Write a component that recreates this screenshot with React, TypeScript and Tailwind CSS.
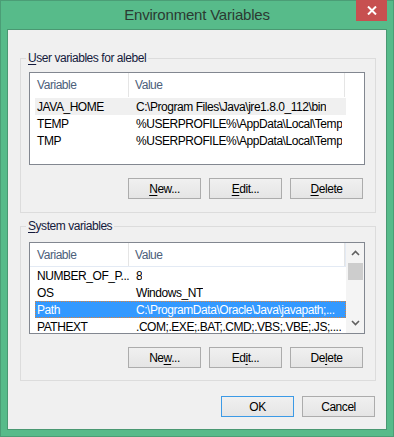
import React from 'react';

type Row = { name: string; value: string; state?: 'inactive' | 'active' };

const userVars: Row[] = [
  { name: 'JAVA_HOME', value: 'C:\\Program Files\\Java\\jre1.8.0_112\\bin', state: 'inactive' },
  { name: 'TEMP', value: '%USERPROFILE%\\AppData\\Local\\Temp' },
  { name: 'TMP', value: '%USERPROFILE%\\AppData\\Local\\Temp' },
];

const systemVars: Row[] = [
  { name: 'NUMBER_OF_P...', value: '8' },
  { name: 'OS', value: 'Windows_NT' },
  { name: 'Path', value: 'C:\\ProgramData\\Oracle\\Java\\javapath;...', state: 'active' },
  { name: 'PATHEXT', value: '.COM;.EXE;.BAT;.CMD;.VBS;.VBE;.JS;....' },
];

// button with an underlined access key
function Btn({ label, keyIdx, primary }: { label: string; keyIdx: number; primary?: boolean }) {
  return (
    <button
      className={`w-[73px] h-[21px] flex items-center justify-center border bg-gradient-to-b from-[#f0f0f0] to-[#e5e5e5] text-[12px] text-black leading-none ${
        primary ? 'border-[#3c9ae6]' : 'border-[#acacac]'
      }`}
    >
      {keyIdx < 0 ? (
        label
      ) : (
        <span>
          {label.slice(0, keyIdx)}
          <span className="underline underline-offset-2">{label[keyIdx]}</span>
          {label.slice(keyIdx + 1)}
        </span>
      )}
    </button>
  );
}

function ListView({ rows, height, scroll }: { rows: Row[]; height: string; scroll?: boolean }) {
  return (
    <div className={`w-[336px] ${height} border border-[#828790] bg-white flex overflow-hidden`}>
      <div className="w-[316px] flex flex-col">
        <div className={`h-[24px] flex shrink-0 bg-white ${scroll ? 'border-b border-[#e3eaf4] border-r' : ''}`}>
          <div className="w-[99px] pl-[7px] flex items-center border-r border-[#e5e5e5] text-[#4c607a]">Variable</div>
          <div className="w-[216px] pl-[6px] flex items-center border-r border-[#e5e5e5] text-[#4c607a]">Value</div>
        </div>
        <div className={`flex flex-col ${scroll ? '' : 'pt-[1px]'}`}>
          {rows.map((r) => (
            <div
              key={r.name}
              className={`ml-[5px] w-[311px] h-[17px] shrink-0 flex items-center whitespace-nowrap ${
                r.state === 'inactive'
                  ? 'bg-[#f0f0f0]'
                  : r.state === 'active'
                    ? 'bg-[#3399ff] text-white border border-dotted border-[#d9843f]'
                    : ''
              }`}
            >
              <div className={`w-[94px] shrink-0 ${r.state === 'active' ? 'pl-[1px]' : 'pl-[2px]'}`}>{r.name}</div>
              <div className={`overflow-hidden ${r.state === 'active' ? 'pl-[6px]' : 'pl-[7px]'}`}>{r.value}</div>
            </div>
          ))}
        </div>
      </div>
      {scroll ? (
        <div className="w-[18px] h-full bg-[#f4f4f4] flex flex-col items-center">
          <div className="h-[20px] flex items-center justify-center">
            <svg width="9" height="6" viewBox="0 0 9 6">
              <path d="M1 5 L4.5 1.5 L8 5" stroke="#606060" strokeWidth="1.6" fill="none" />
            </svg>
          </div>
          <div className="w-[15px] h-[17px] bg-[#cdcdcd]" />
          <div className="flex-1" />
          <div className="h-[20px] flex items-center justify-center">
            <svg width="9" height="6" viewBox="0 0 9 6">
              <path d="M1 1 L4.5 4.5 L8 1" stroke="#606060" strokeWidth="1.6" fill="none" />
            </svg>
          </div>
        </div>
      ) : (
        <div className="flex-1 h-[24px] border-b border-transparent" />
      )}
    </div>
  );
}

function Group({
  label,
  keyIdx,
  children,
  pt,
  pb,
}: {
  label: string;
  keyIdx: number;
  children: React.ReactNode;
  pt: string;
  pb: string;
}) {
  return (
    <div className={`relative ml-[12px] w-[356px] h-[155px] border border-[#dcdcdc] pl-[8px] ${pt} ${pb} flex flex-col`}>
      <span className="absolute -top-[9px] left-[5px] px-[2px] bg-[#f0f0f0] text-[#141a3c] leading-[16px]">
        {label.slice(0, keyIdx)}
        <span className="underline underline-offset-2">{label[keyIdx]}</span>
        {label.slice(keyIdx + 1)}
      </span>
      {children}
    </div>
  );
}

export default function App() {
  return (
    <div
      className="w-[394px] h-[437px] bg-[#57bb8a] border border-[#4b9d76] flex flex-col text-[12px] tracking-[-0.45px] text-black"
      style={{ fontFamily: '"Liberation Sans", "Noto Sans", sans-serif' }}
    >
      <div className="relative h-[28px] flex items-center justify-center shrink-0">
        <span className="text-[15px] tracking-[-0.2px] text-[#2b3a32] pt-[1px]">Environment Variables</span>
        <div className="absolute -top-[1px] right-[6px] w-[31px] h-[21px] bg-[#c75050] flex items-center justify-center">
          <svg width="10" height="9" viewBox="0 0 10 9">
            <path d="M1 0.5 L9 8.5 M9 0.5 L1 8.5" stroke="#fff" strokeWidth="2" />
          </svg>
        </div>
      </div>
      <div className="ml-[6px] w-[380px] h-[401px] border border-[#4a9872] bg-[#f0f0f0] flex flex-col pt-[28px]">
        <Group label="User variables for alebel" keyIdx={0} pt="pt-[13px]" pb="pb-[13px]">
          <ListView rows={userVars} height="h-[93px]" />
          <div className="mt-[13px] flex gap-[8px] pl-[99px]">
            <Btn label="New..." keyIdx={0} />
            <Btn label="Edit..." keyIdx={0} />
            <Btn label="Delete" keyIdx={0} />
          </div>
        </Group>
        <div className="h-[13px] shrink-0" />
        <Group label="System variables" keyIdx={0} pt="pt-[15px]" pb="pb-[12px]">
          <ListView rows={systemVars} height="h-[92px]" scroll />
          <div className="mt-[13px] flex gap-[8px] pl-[99px]">
            <Btn label="New..." keyIdx={2} />
            <Btn label="Edit..." keyIdx={2} />
            <Btn label="Delete" keyIdx={2} />
          </div>
        </Group>
        <div className="mt-[15px] flex gap-[8px] pl-[213px]">
          <Btn label="OK" keyIdx={-1} primary />
          <Btn label="Cancel" keyIdx={-1} />
        </div>
      </div>
    </div>
  );
}
